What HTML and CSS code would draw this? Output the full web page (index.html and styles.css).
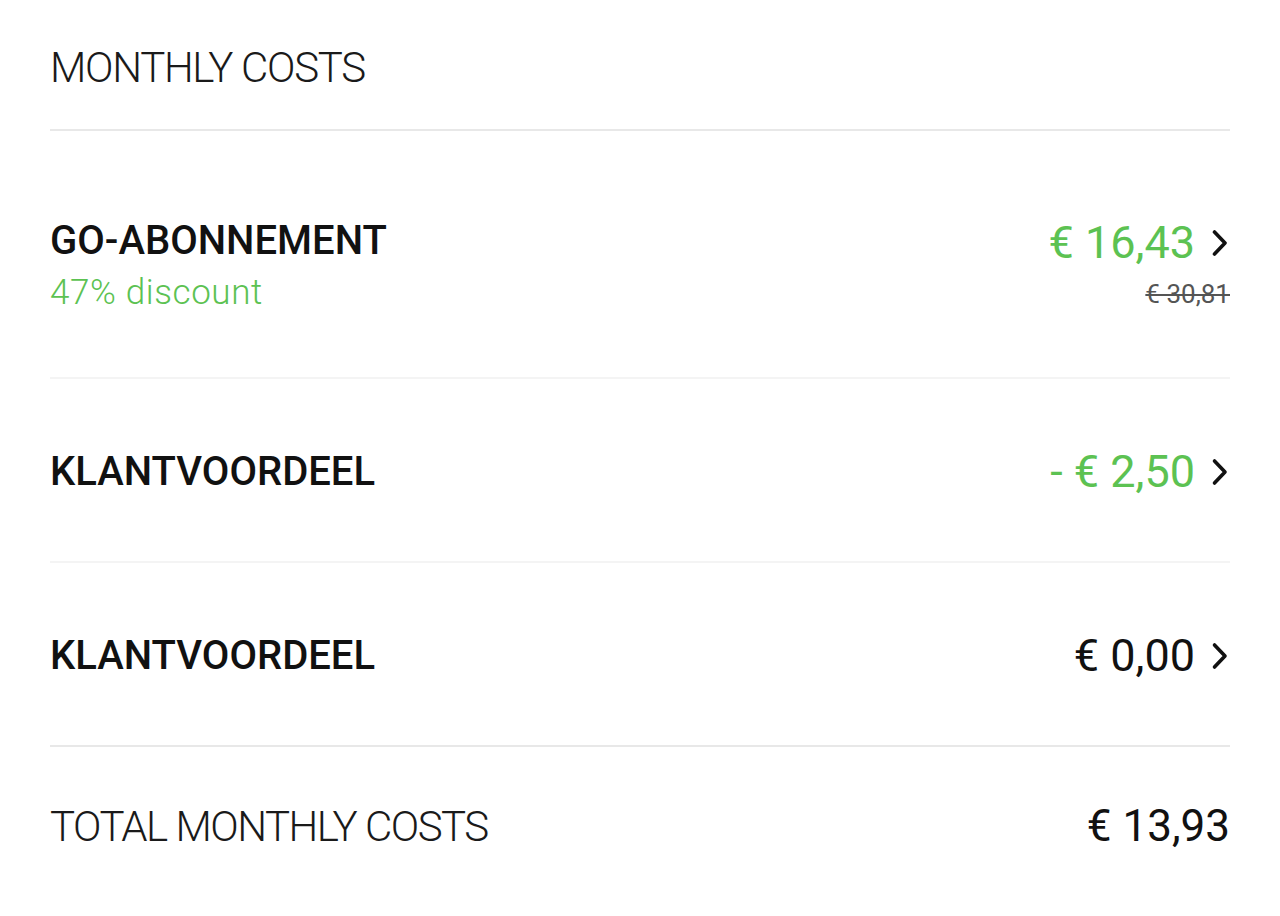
FILE: index.html
```html
<!DOCTYPE html>
<html lang="nl">
<head>
<meta charset="utf-8">
<title>Monthly costs</title>
<link rel="stylesheet" href="styles.css">
</head>
<body>
<main class="costs">
  <h1 class="costs__title">MONTHLY COSTS</h1>

  <div class="row row--first">
    <div class="row__left">
      <div class="row__name">GO-ABONNEMENT</div>
      <div class="row__note">47% discount</div>
    </div>
    <div class="row__right">
      <div class="row__priceline">
        <span class="price price--green">€ 16,43</span>
        <svg class="chev" viewBox="0 0 18 28" width="18" height="28"><path d="M3.5 3 L14 14 L3.5 25" fill="none" stroke="#111" stroke-width="3.6" stroke-linecap="round" stroke-linejoin="round"/></svg>
      </div>
      <div class="price--old">€ 30,81</div>
    </div>
  </div>

  <div class="row row--light">
    <div class="row__left">
      <div class="row__name">KLANTVOORDEEL</div>
    </div>
    <div class="row__right">
      <div class="row__priceline">
        <span class="price price--green">- € 2,50</span>
        <svg class="chev" viewBox="0 0 18 28" width="18" height="28"><path d="M3.5 3 L14 14 L3.5 25" fill="none" stroke="#111" stroke-width="3.6" stroke-linecap="round" stroke-linejoin="round"/></svg>
      </div>
    </div>
  </div>

  <div class="row row--light row--last">
    <div class="row__left">
      <div class="row__name">KLANTVOORDEEL</div>
    </div>
    <div class="row__right">
      <div class="row__priceline">
        <span class="price">€ 0,00</span>
        <svg class="chev" viewBox="0 0 18 28" width="18" height="28"><path d="M3.5 3 L14 14 L3.5 25" fill="none" stroke="#111" stroke-width="3.6" stroke-linecap="round" stroke-linejoin="round"/></svg>
      </div>
    </div>
  </div>

  <div class="total">
    <div class="total__label">TOTAL MONTHLY COSTS</div>
    <div class="total__value">€ 13,93</div>
  </div>
</main>
</body>
</html>
```

FILE: styles.css
```css
html, body {
  margin: 0;
  padding: 0;
  background: #ffffff;
}

body {
  font-family: Roboto, "Liberation Sans", sans-serif;
  color: #111111;
}

.costs {
  padding: 0 50px;
}

.costs__title {
  margin: 0;
  height: 131px;
  box-sizing: border-box;
  padding-top: 46px;
  font-size: 42px;
  line-height: 44px;
  font-weight: 300;
  letter-spacing: -1.3px;
  color: #1a1a1a;
  border-bottom: 2px solid #e8e8e8;
}

.row {
  display: flex;
  justify-content: space-between;
  align-items: center;
  box-sizing: border-box;
  height: 184px;
  padding-top: 4px;
  border-bottom: 2px solid #f4f4f4;
}

.row--first {
  height: 248px;
  align-items: flex-start;
  padding-top: 86px;
}

.row--last {
  border-bottom-color: #e8e8e8;
}

.row__name {
  font-size: 40px;
  line-height: 48px;
  font-weight: 500;
  letter-spacing: 0px;
  color: #111111;
}

.row__note {
  font-size: 35px;
  line-height: 40px;
  color: #5cc252;
  font-weight: 300;
  letter-spacing: 0.6px;
  margin-top: 8px;
}

.row__right {
  display: flex;
  flex-direction: column;
  align-items: flex-end;
}

.row__priceline {
  display: flex;
  align-items: center;
  gap: 16px;
}

.price {
  font-size: 45px;
  line-height: 52px;
  font-weight: 400;
  color: #111111;
}

.price--green {
  color: #5cc252;
}

.chev {
  display: block;
  margin-right: 1px;
}

.price--old {
  font-size: 26px;
  line-height: 32px;
  color: #555555;
  text-decoration: line-through;
  margin-top: 9px;
}

.total {
  display: flex;
  justify-content: space-between;
  align-items: center;
  padding-top: 55px;
}

.total__label {
  font-size: 42px;
  line-height: 48px;
  font-weight: 300;
  letter-spacing: -1.5px;
  color: #1a1a1a;
}

.total__value {
  font-size: 44px;
  line-height: 52px;
  font-weight: 400;
  color: #111111;
  margin-top: -2px;
}
```
